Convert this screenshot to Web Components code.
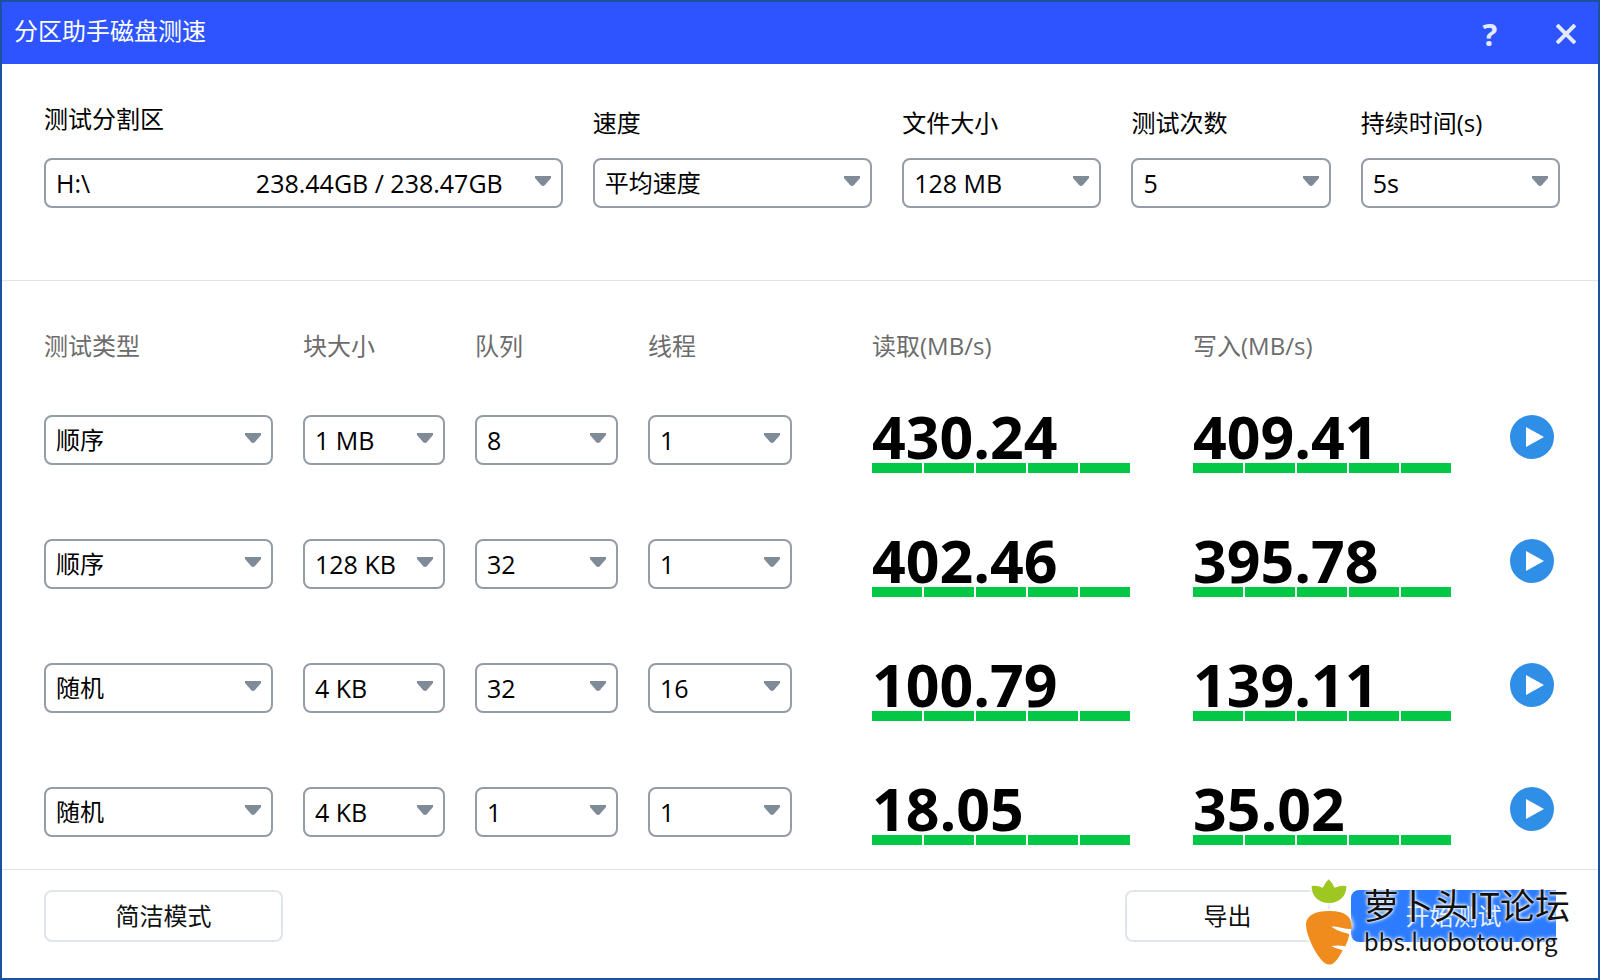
<!DOCTYPE html>
<html lang="zh-CN">
<head>
<meta charset="utf-8">
<title>分区助手磁盘测速</title>
<style>
  body {
    margin: 0;
    font: 24px/30px "Open Sans", "Noto Sans CJK SC", sans-serif;
    color: #000;
    background: #fff;
  }
</style>
</head>
<body>
<disk-benchmark></disk-benchmark>

<script>
const define = (name, html, setup) => {
  const template = document.createElement('template');
  template.innerHTML = html;
  customElements.define(name, class extends HTMLElement {
    connectedCallback() {
      if (this.shadowRoot) return;
      const root = this.attachShadow({ mode: 'open' });
      root.append(template.content.cloneNode(true));
      if (setup) setup(this, root);
    }
  });
};

/* Drop-down; "options" is a | separated list, the first one is selected. */
define('drop-down', `
  <style>
    :host { display: block; min-width: 0; }
    label { display: block; margin-bottom: 20px; }
    label[hidden] { display: none; }
    :host([tall-label]) label { margin-bottom: 24px; }
    .box { display: grid; grid-template-columns: minmax(0, 1fr) auto 16px; column-gap: 44px; align-items: center; height: 50px; }
    select {
      grid-area: 1 / 1 / 2 / 4; box-sizing: border-box; width: 100%; height: 50px; margin: 0; padding: 0 30px 0 10px;
      appearance: none; border: 2px solid #949ca8; border-radius: 8px; background: #fff; color: #000;
      font: 25px/30px "Open Sans", "Noto Sans CJK SC", sans-serif;
    }
    :host([cjk]) select { font-size: 24px; }
    .note { grid-area: 1 / 2; font-size: 25px; pointer-events: none; }
    svg { grid-area: 1 / 3; width: 16px; height: 16px; margin: 0 12px 0 -12px; pointer-events: none; }
  </style>
  <label for="s"></label>
  <div class="box">
    <select id="s"></select>
    <span class="note"><slot></slot></span>
    <svg viewBox="0 0 16 16" aria-hidden="true"><path d="M0 1h16v2l-6 7q-2 2-4 0L0 3z" fill="#808b98"/></svg>
  </div>`,
(host, root) => {
  const label = root.querySelector('label');
  const select = root.querySelector('select');
  if (host.hasAttribute('label')) label.textContent = host.getAttribute('label');
  else {
    label.hidden = true;
    select.setAttribute('aria-label', host.getAttribute('name'));
  }
  host.getAttribute('options').split('|').forEach(text => select.add(new Option(text)));
});

define('speed-value', `
  <style>
    :host { display: block; }
    .number { height: 48px; font-size: 59px; line-height: 42px; font-weight: 700; }
    .bar { display: flex; gap: 2px; }
    i { flex: 1; height: 10px; background: #02c845; }
  </style>
  <div class="number"><slot></slot></div>
  <div class="bar"><i></i><i></i><i></i><i></i><i></i></div>`);

define('play-button', `
  <style>
    :host { display: block; }
    button { display: block; width: 44px; height: 44px; padding: 0; border: 0; background: none; cursor: pointer; }
    svg { display: block; }
  </style>
  <button type="button" aria-label="开始">
    <svg width="44" height="44" viewBox="0 0 44 44"><circle cx="22" cy="22" r="22" fill="#2f8ee6"/><path d="M16 12v20l18-10z" fill="#fff"/></svg>
  </button>`);

define('push-button', `
  <style>
    :host { display: block; }
    button {
      box-sizing: border-box; width: 100%; height: 52px; padding: 0; border: 2px solid #e0e4ec; border-radius: 8px;
      background: #fff; color: #111; font: inherit; cursor: pointer;
    }
    :host([primary]) button { border-color: #2d7cff; background: #2d7cff; color: #e4eeff; border-radius: 8px 0 0 8px; }
  </style>
  <button type="button"><slot></slot></button>`);

define('title-bar', `
  <style>
    :host { display: flex; align-items: center; height: 62px; padding: 0 18px 0 12px; background: #2d54ff; color: #fff; }
    h1 { flex: 1; margin: 0 0 4px; font-size: 24px; line-height: 30px; font-weight: 400; }
    button {
      display: grid; place-items: center; width: 28px; height: 32px; margin: 2px 0 0 48px; padding: 0;
      border: 0; background: none; color: #e3e9ff; font: 700 31px/32px "Open Sans", sans-serif; cursor: pointer;
    }
  </style>
  <h1><slot></slot></h1>
  <button type="button" aria-label="帮助">?</button>
  <button type="button" aria-label="关闭"><svg width="20" height="20" viewBox="0 0 20 20"><path d="M1 1l18 18M19 1L1 19" stroke="#e3e9ff" stroke-width="4"/></svg></button>`);

define('test-settings', `
  <style>
    :host {
      display: grid; grid-template-columns: 518fr 279fr 199fr 199fr 199fr; gap: 30px; align-items: end;
      padding: 40px 38px 72px 42px; border-bottom: 1px solid #dfe3e8;
    }
  </style>
  <drop-down label="测试分割区" tall-label options="H:\\">238.44GB / 238.47GB</drop-down>
  <drop-down label="速度" cjk options="平均速度"></drop-down>
  <drop-down label="文件大小" options="128 MB"></drop-down>
  <drop-down label="测试次数" options="5"></drop-down>
  <drop-down label="持续时间(s)" options="5s"></drop-down>`);

const tests = [
  ['顺序', '1 MB', '8', '1', '430.24', '409.41'],
  ['顺序', '128 KB', '32', '1', '402.46', '395.78'],
  ['随机', '4 KB', '32', '16', '100.79', '139.11'],
  ['随机', '4 KB', '1', '1', '18.05', '35.02']
];
const names = ['测试类型', '块大小', '队列', '线程'];

define('test-table', `
  <style>
    :host { display: block; flex: 1; padding: 50px 44px 24px 42px; }
    table, thead, tbody { display: grid; }
    table { row-gap: 54px; }
    tbody { row-gap: 66px; }
    tr { display: grid; grid-template-columns: 259fr 172fr 173fr 224fr 321fr 317fr 44px; }
    th, td { min-width: 0; padding: 0 30px 0 0; text-align: left; font-weight: 400; }
    th { color: #6c6c6c; font-size: 24px; white-space: nowrap; }
    td:nth-child(4) { padding-right: 80px; }
    td:nth-child(5) { padding-right: 63px; }
    td:nth-child(6) { padding-right: 59px; }
    td:nth-child(7), th:last-child { padding-right: 0; }
  </style>
  <table>
    <thead><tr>${[...names, '读取(MB/s)', '写入(MB/s)', ''].map(n => `<th scope="col">${n}</th>`).join('')}</tr></thead>
    <tbody>${tests.map(row => `<tr>${row.map((value, i) => `<td>${i < 4
      ? `<drop-down name="${names[i]}" ${i ? '' : 'cjk'} options="${value}"></drop-down>`
      : `<speed-value>${value}</speed-value>`}</td>`).join('')}<td><play-button></play-button></td></tr>`).join('')}</tbody>
  </table>`);

define('forum-badge', `
  <style>
    :host {
      display: flex; gap: 12px; width: max-content; color: #111; white-space: nowrap; pointer-events: none;
      font-family: "Noto Sans CJK SC", sans-serif; text-shadow: 0 0 2px #fff, 0 0 3px #fff, 0 0 4px #fff;
    }
    svg { overflow: visible; filter: drop-shadow(0 0 2px #fff) drop-shadow(0 0 2px #fff); }
    .name { font-size: 35px; line-height: 50px; }
    .site { font-size: 24px; line-height: 24px; }
  </style>
  <svg width="46" height="86" viewBox="0 0 138 256" aria-hidden="true">
    <path d="M17 20Q35 18 50 25Q60 8 68 0Q77 8 86 25Q104 18 121 20C122 50 100 71 69 71C38 71 16 50 17 20Z" fill="#9ec722"/>
    <path d="M69 95C108 95 140 105 137 149Q120 149 105 145Q90 141 76 142Q92 153 108 158Q120 161 130 165Q127 184 118 201Q98 196 75 200Q90 208 110 213Q95 244 80 253Q69 259 57 252C30 230 0 168 0 134C2 108 28 95 69 95Z" fill="#f08b1d"/>
  </svg>
  <div><div class="name">萝卜头IT论坛</div><div class="site">bbs.luobotou.org</div></div>`);

define('action-bar', `
  <style>
    :host {
      position: relative; display: flex; gap: 21px; padding: 20px 42px 36px; border-top: 1px solid #dfe3e8;
    }
    .mode { width: 239px; margin-right: auto; }
    .action { width: 205px; }
    forum-badge { position: absolute; right: 28px; top: 9px; }
  </style>
  <push-button class="mode">简洁模式</push-button>
  <push-button class="action">导出</push-button>
  <push-button class="action" primary>开始测试</push-button>
  <forum-badge></forum-badge>`);

define('disk-benchmark', `
  <style>
    :host { display: flex; flex-direction: column; box-sizing: border-box; min-height: 100vh; border: 2px solid #1a52a0; }
  </style>
  <title-bar>分区助手磁盘测速</title-bar>
  <test-settings></test-settings>
  <test-table></test-table>
  <action-bar></action-bar>`);
</script>
</body>
</html>
